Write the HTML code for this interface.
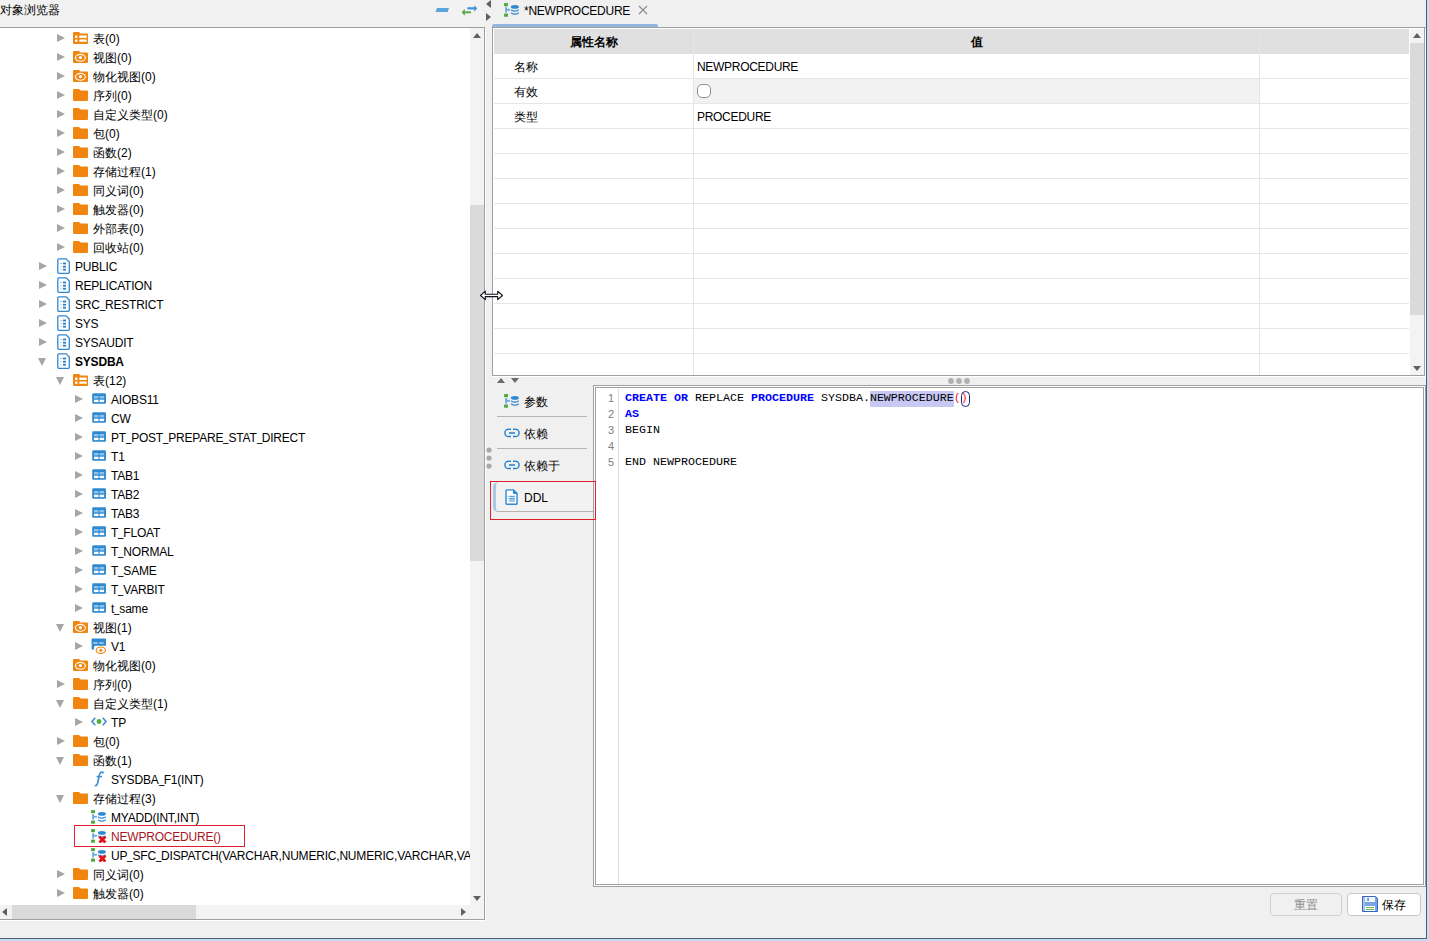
<!DOCTYPE html>
<html><head><meta charset="utf-8"><title>DM</title><style>
*{margin:0;padding:0;box-sizing:border-box}
html,body{width:1429px;height:941px;overflow:hidden;background:#f0f0f0;font-family:"Liberation Sans",sans-serif;font-size:12px;color:#000}
.a{position:absolute}
.t{position:absolute;white-space:nowrap;line-height:19px;height:19px}
.tri{position:absolute;width:0;height:0}
.r{border-left:8px solid #a6a6a6;border-top:4.5px solid transparent;border-bottom:4.5px solid transparent}
.d{border-top:8px solid #a6a6a6;border-left:4.5px solid transparent;border-right:4.5px solid transparent}
svg{position:absolute;overflow:visible}
.mono{font-family:"Liberation Mono",monospace}
</style></head>
<body>

<svg width="0" height="0" style="position:absolute">
<defs>
 <symbol id="fold" viewBox="0 0 15 12"><path d="M1 0H6L7.6 1.6H14A1 1 0 0 1 15 2.6V11A1 1 0 0 1 14 12H1A1 1 0 0 1 0 11V1A1 1 0 0 1 1 0Z" fill="#f0860f"/></symbol>
 <symbol id="foldtab" viewBox="0 0 15 12"><path d="M1 0H6L7.6 1.6H14A1 1 0 0 1 15 2.6V11A1 1 0 0 1 14 12H1A1 1 0 0 1 0 11V1A1 1 0 0 1 1 0Z" fill="#f0860f"/><rect x="2" y="3.6" width="2.5" height="2.3" rx="0.4" fill="#fff"/><rect x="6.3" y="3.6" width="7.5" height="2.3" rx="0.4" fill="#fff"/><rect x="2" y="7.5" width="2.5" height="2.3" rx="0.4" fill="#fff"/><rect x="6.3" y="7.5" width="7.5" height="2.3" rx="0.4" fill="#fff"/></symbol>
 <symbol id="foldeye" viewBox="0 0 15 12"><path d="M1 0H6L7.6 1.6H14A1 1 0 0 1 15 2.6V11A1 1 0 0 1 14 12H1A1 1 0 0 1 0 11V1A1 1 0 0 1 1 0Z" fill="#f0860f"/><ellipse cx="7.4" cy="6.8" rx="5" ry="3.4" fill="none" stroke="#fff" stroke-width="1.1"/><circle cx="7.4" cy="6.6" r="1.6" fill="#fff"/></symbol>
 <symbol id="schema" viewBox="0 0 13 16"><path d="M1.8 0.9H9.2L12.3 4V14.4A0.9 0.9 0 0 1 11.4 15.3H1.7A0.9 0.9 0 0 1 0.8 14.4V1.8A0.9 0.9 0 0 1 1.8 0.9Z" fill="#fff" stroke="#2f88cf" stroke-width="1.3"/><rect x="3.2" y="5" width="2" height="1" fill="#8cbfe6"/><rect x="6" y="4.6" width="3" height="1.8" fill="#2a7fc8"/><rect x="3.2" y="8.2" width="2" height="1" fill="#b5d5ee"/><rect x="6" y="7.8" width="3" height="1.8" fill="#2a7fc8"/><rect x="3.2" y="11.2" width="2" height="1" fill="#b5d5ee"/><rect x="6" y="10.8" width="3" height="1.8" fill="#2a7fc8"/></symbol>
 <symbol id="tbl" viewBox="0 0 14 11"><rect x="0.2" y="0.3" width="13.8" height="10.4" rx="1.3" fill="#3189d0"/><rect x="2" y="3" width="4.5" height="2.4" fill="#8cc3ea"/><rect x="7.6" y="3" width="4.5" height="2.4" fill="#8cc3ea"/><rect x="2" y="6.7" width="4.5" height="2.4" fill="#fff"/><rect x="7.6" y="6.7" width="4.5" height="2.4" fill="#fff"/></symbol>
 <symbol id="proc" viewBox="0 0 16 14"><rect x="0.1" y="0.1" width="3.8" height="3.1" fill="#45a838"/><rect x="0.1" y="10.6" width="3.8" height="3.1" fill="#45a838"/><path d="M1.3 4.2H2.9L2.7 9.8H1.5Z" fill="#3f93d6"/><rect x="2.7" y="5.8" width="3.2" height="1.9" fill="#6aaade"/><ellipse cx="10.9" cy="3.9" rx="4" ry="1.8" fill="#2f88cf"/><path d="M6.9 6.2Q10.9 8.6 14.9 6.2V7.4Q10.9 10 6.9 7.4Z" fill="#2f88cf"/><path d="M6.9 9.2Q10.9 11.6 14.9 9.2V10.4Q10.9 13 6.9 10.4Z" fill="#2f88cf"/></symbol>
 <symbol id="procx" viewBox="0 0 16 14"><rect x="0.1" y="0.1" width="3.8" height="3.1" fill="#45a838"/><rect x="0.1" y="10.6" width="3.8" height="3.1" fill="#45a838"/><path d="M1.3 4.2H2.9L2.7 9.8H1.5Z" fill="#3f93d6"/><rect x="2.7" y="5.8" width="3.2" height="1.9" fill="#6aaade"/><ellipse cx="10.9" cy="3.9" rx="4" ry="1.8" fill="#2f88cf"/><path d="M6.9 6.2Q10.9 8.6 14.9 6.2V7.4Q10.9 10 6.9 7.4Z" fill="#2f88cf"/><path d="M8.4 7.8L14.4 13.6M14.4 7.8L8.4 13.6" stroke="#e8101a" stroke-width="2.8"/></symbol>
 <symbol id="link" viewBox="0 0 16 12"><path d="M7 2.3H4.5A3.6 3.6 0 0 0 4.5 9.5H7M9 2.3H11.5A3.6 3.6 0 0 1 11.5 9.5H9" fill="none" stroke="#2f88cf" stroke-width="1.5"/><rect x="5" y="5.1" width="6" height="1.8" fill="#3f93d6"/></symbol>
 <symbol id="doc" viewBox="0 0 13 16"><path d="M1.8 0.9H8.6L12 4.3V14.4A0.9 0.9 0 0 1 11.1 15.3H1.9A0.9 0.9 0 0 1 1 14.4V1.7A0.8 0.8 0 0 1 1.8 0.9Z" fill="#fff" stroke="#2f88cf" stroke-width="1.4"/><path d="M8.4 1V4.5H12" fill="#2f88cf" stroke="#2f88cf" stroke-width="1"/><rect x="2.6" y="6.9" width="1" height="1" fill="#6aaade"/><rect x="4.3" y="6.8" width="5.6" height="1.1" fill="#4196d8"/><rect x="2.6" y="8.9" width="1" height="1" fill="#6aaade"/><rect x="4.3" y="8.8" width="5.6" height="1.1" fill="#4196d8"/><rect x="4.3" y="10.2" width="5.6" height="2.6" fill="#8cc0e8"/><rect x="2.6" y="11" width="1" height="1" fill="#9cc8ec"/></symbol>
</defs></svg>

<!-- left panel title bar -->
<div class="a" style="left:0;top:0;width:484px;height:27px;background:#f2f2f2"></div>
<div class="t" style="left:0;top:1px">对象浏览器</div>
<svg style="left:435px;top:7px" width="16" height="6"><path d="M2 1H14L12.6 5H0.5Z" fill="#5aa5dc"/></svg>
<svg style="left:461px;top:4px" width="18" height="13"><path d="M6.4 4.3H13.6" stroke="#3a92d6" stroke-width="2.1"/><path d="M13.2 1.2L16.2 4.3L13.2 7.7Z" fill="#3a92d6"/><path d="M3.4 8.3H10" stroke="#52a843" stroke-width="1.9"/><path d="M3.8 4.9L0.7 8.3L3.8 11.7Z" fill="#52a843"/></svg>
<!-- tree panel -->
<div class="a" style="left:0;top:27px;width:485px;height:893px;border-top:1px solid #a0a0a0;border-right:1px solid #a0a0a0;border-bottom:1px solid #a0a0a0;background:#fff"></div>
<div class="a" style="left:0;top:28px;width:484px;height:877px;overflow:hidden">
<div class="a" style="left:0;top:-28px;width:484px;height:941px">
<div class="tri r" style="left:57px;top:34px"></div>
<svg style="left:73px;top:32px" width="15" height="12"><use href="#foldtab"/></svg>
<div class="t" style="left:93px;top:30px;">表(0)</div>
<div class="tri r" style="left:57px;top:53px"></div>
<svg style="left:73px;top:51px" width="15" height="12"><use href="#foldeye"/></svg>
<div class="t" style="left:93px;top:49px;">视图(0)</div>
<div class="tri r" style="left:57px;top:72px"></div>
<svg style="left:73px;top:70px" width="15" height="12"><use href="#foldeye"/></svg>
<div class="t" style="left:93px;top:68px;">物化视图(0)</div>
<div class="tri r" style="left:57px;top:91px"></div>
<svg style="left:73px;top:89px" width="15" height="12"><use href="#fold"/></svg>
<div class="t" style="left:93px;top:87px;">序列(0)</div>
<div class="tri r" style="left:57px;top:110px"></div>
<svg style="left:73px;top:108px" width="15" height="12"><use href="#fold"/></svg>
<div class="t" style="left:93px;top:106px;">自定义类型(0)</div>
<div class="tri r" style="left:57px;top:129px"></div>
<svg style="left:73px;top:127px" width="15" height="12"><use href="#fold"/></svg>
<div class="t" style="left:93px;top:125px;">包(0)</div>
<div class="tri r" style="left:57px;top:148px"></div>
<svg style="left:73px;top:146px" width="15" height="12"><use href="#fold"/></svg>
<div class="t" style="left:93px;top:144px;">函数(2)</div>
<div class="tri r" style="left:57px;top:167px"></div>
<svg style="left:73px;top:165px" width="15" height="12"><use href="#fold"/></svg>
<div class="t" style="left:93px;top:163px;">存储过程(1)</div>
<div class="tri r" style="left:57px;top:186px"></div>
<svg style="left:73px;top:184px" width="15" height="12"><use href="#fold"/></svg>
<div class="t" style="left:93px;top:182px;">同义词(0)</div>
<div class="tri r" style="left:57px;top:205px"></div>
<svg style="left:73px;top:203px" width="15" height="12"><use href="#fold"/></svg>
<div class="t" style="left:93px;top:201px;">触发器(0)</div>
<div class="tri r" style="left:57px;top:224px"></div>
<svg style="left:73px;top:222px" width="15" height="12"><use href="#fold"/></svg>
<div class="t" style="left:93px;top:220px;">外部表(0)</div>
<div class="tri r" style="left:57px;top:243px"></div>
<svg style="left:73px;top:241px" width="15" height="12"><use href="#fold"/></svg>
<div class="t" style="left:93px;top:239px;">回收站(0)</div>
<div class="tri r" style="left:39px;top:262px"></div>
<svg style="left:57px;top:258px" width="13" height="16"><use href="#schema"/></svg>
<div class="t" style="left:75px;top:258px;letter-spacing:-0.2px;">PUBLIC</div>
<div class="tri r" style="left:39px;top:281px"></div>
<svg style="left:57px;top:277px" width="13" height="16"><use href="#schema"/></svg>
<div class="t" style="left:75px;top:277px;letter-spacing:-0.2px;">REPLICATION</div>
<div class="tri r" style="left:39px;top:300px"></div>
<svg style="left:57px;top:296px" width="13" height="16"><use href="#schema"/></svg>
<div class="t" style="left:75px;top:296px;letter-spacing:-0.2px;">SRC<span style="display:inline-block;width:5.2px;transform:scaleX(0.8);transform-origin:0 0;position:relative;top:-1px">_</span>RESTRICT</div>
<div class="tri r" style="left:39px;top:319px"></div>
<svg style="left:57px;top:315px" width="13" height="16"><use href="#schema"/></svg>
<div class="t" style="left:75px;top:315px;letter-spacing:-0.2px;">SYS</div>
<div class="tri r" style="left:39px;top:338px"></div>
<svg style="left:57px;top:334px" width="13" height="16"><use href="#schema"/></svg>
<div class="t" style="left:75px;top:334px;letter-spacing:-0.2px;">SYSAUDIT</div>
<div class="tri d" style="left:38px;top:358px"></div>
<svg style="left:57px;top:353px" width="13" height="16"><use href="#schema"/></svg>
<div class="t" style="left:75px;top:353px;letter-spacing:-0.2px;font-weight:bold;">SYSDBA</div>
<div class="tri d" style="left:56px;top:377px"></div>
<svg style="left:73px;top:374px" width="15" height="12"><use href="#foldtab"/></svg>
<div class="t" style="left:93px;top:372px;">表(12)</div>
<div class="tri r" style="left:75px;top:395px"></div>
<svg style="left:92px;top:393px" width="14" height="11"><use href="#tbl"/></svg>
<div class="t" style="left:111px;top:391px;letter-spacing:-0.2px;">AIOBS11</div>
<div class="tri r" style="left:75px;top:414px"></div>
<svg style="left:92px;top:412px" width="14" height="11"><use href="#tbl"/></svg>
<div class="t" style="left:111px;top:410px;letter-spacing:-0.2px;">CW</div>
<div class="tri r" style="left:75px;top:433px"></div>
<svg style="left:92px;top:431px" width="14" height="11"><use href="#tbl"/></svg>
<div class="t" style="left:111px;top:429px;letter-spacing:-0.2px;">PT<span style="display:inline-block;width:5.2px;transform:scaleX(0.8);transform-origin:0 0;position:relative;top:-1px">_</span>POST<span style="display:inline-block;width:5.2px;transform:scaleX(0.8);transform-origin:0 0;position:relative;top:-1px">_</span>PREPARE<span style="display:inline-block;width:5.2px;transform:scaleX(0.8);transform-origin:0 0;position:relative;top:-1px">_</span>STAT<span style="display:inline-block;width:5.2px;transform:scaleX(0.8);transform-origin:0 0;position:relative;top:-1px">_</span>DIRECT</div>
<div class="tri r" style="left:75px;top:452px"></div>
<svg style="left:92px;top:450px" width="14" height="11"><use href="#tbl"/></svg>
<div class="t" style="left:111px;top:448px;letter-spacing:-0.2px;">T1</div>
<div class="tri r" style="left:75px;top:471px"></div>
<svg style="left:92px;top:469px" width="14" height="11"><use href="#tbl"/></svg>
<div class="t" style="left:111px;top:467px;letter-spacing:-0.2px;">TAB1</div>
<div class="tri r" style="left:75px;top:490px"></div>
<svg style="left:92px;top:488px" width="14" height="11"><use href="#tbl"/></svg>
<div class="t" style="left:111px;top:486px;letter-spacing:-0.2px;">TAB2</div>
<div class="tri r" style="left:75px;top:509px"></div>
<svg style="left:92px;top:507px" width="14" height="11"><use href="#tbl"/></svg>
<div class="t" style="left:111px;top:505px;letter-spacing:-0.2px;">TAB3</div>
<div class="tri r" style="left:75px;top:528px"></div>
<svg style="left:92px;top:526px" width="14" height="11"><use href="#tbl"/></svg>
<div class="t" style="left:111px;top:524px;letter-spacing:-0.2px;">T<span style="display:inline-block;width:5.2px;transform:scaleX(0.8);transform-origin:0 0;position:relative;top:-1px">_</span>FLOAT</div>
<div class="tri r" style="left:75px;top:547px"></div>
<svg style="left:92px;top:545px" width="14" height="11"><use href="#tbl"/></svg>
<div class="t" style="left:111px;top:543px;letter-spacing:-0.2px;">T<span style="display:inline-block;width:5.2px;transform:scaleX(0.8);transform-origin:0 0;position:relative;top:-1px">_</span>NORMAL</div>
<div class="tri r" style="left:75px;top:566px"></div>
<svg style="left:92px;top:564px" width="14" height="11"><use href="#tbl"/></svg>
<div class="t" style="left:111px;top:562px;letter-spacing:-0.2px;">T<span style="display:inline-block;width:5.2px;transform:scaleX(0.8);transform-origin:0 0;position:relative;top:-1px">_</span>SAME</div>
<div class="tri r" style="left:75px;top:585px"></div>
<svg style="left:92px;top:583px" width="14" height="11"><use href="#tbl"/></svg>
<div class="t" style="left:111px;top:581px;letter-spacing:-0.2px;">T<span style="display:inline-block;width:5.2px;transform:scaleX(0.8);transform-origin:0 0;position:relative;top:-1px">_</span>VARBIT</div>
<div class="tri r" style="left:75px;top:604px"></div>
<svg style="left:92px;top:602px" width="14" height="11"><use href="#tbl"/></svg>
<div class="t" style="left:111px;top:600px;letter-spacing:-0.2px;">t<span style="display:inline-block;width:5.2px;transform:scaleX(0.8);transform-origin:0 0;position:relative;top:-1px">_</span>same</div>
<div class="tri d" style="left:56px;top:624px"></div>
<svg style="left:73px;top:621px" width="15" height="12"><use href="#foldeye"/></svg>
<div class="t" style="left:93px;top:619px;">视图(1)</div>
<div class="tri r" style="left:75px;top:642px"></div>
<svg style="left:91px;top:638px" width="16" height="17"><path d="M1.4 0.5H14.2A0.8 0.8 0 0 1 15 1.3V7.8H4.2Q2.9 8.2 3 9.6V10.6Q3 11.8 1.8 11.8A1.2 1.2 0 0 1 0.6 10.6V1.3A0.8 0.8 0 0 1 1.4 0.5Z" fill="#3189d0"/><rect x="2.2" y="4" width="4.4" height="2" fill="#8cc3ea"/><rect x="8.2" y="4" width="4.4" height="2" fill="#8cc3ea"/><ellipse cx="9.8" cy="12.2" rx="5.6" ry="4" fill="#fff"/><ellipse cx="9.8" cy="12.2" rx="4.6" ry="3.2" fill="#fff" stroke="#f0860f" stroke-width="1.2"/><circle cx="9.8" cy="12.2" r="1.5" fill="#f0860f"/></svg>
<div class="t" style="left:111px;top:638px;letter-spacing:-0.2px;">V1</div>
<svg style="left:73px;top:659px" width="15" height="12"><use href="#foldeye"/></svg>
<div class="t" style="left:93px;top:657px;">物化视图(0)</div>
<div class="tri r" style="left:57px;top:680px"></div>
<svg style="left:73px;top:678px" width="15" height="12"><use href="#fold"/></svg>
<div class="t" style="left:93px;top:676px;">序列(0)</div>
<div class="tri d" style="left:56px;top:700px"></div>
<svg style="left:73px;top:697px" width="15" height="12"><use href="#fold"/></svg>
<div class="t" style="left:93px;top:695px;">自定义类型(1)</div>
<div class="tri r" style="left:75px;top:718px"></div>
<svg style="left:91px;top:717px" width="16" height="10"><path d="M4.2 0.8L1 4.5L4.2 8.2M11.8 0.8L15 4.5L11.8 8.2" fill="none" stroke="#3b8fd0" stroke-width="1.6"/><circle cx="8" cy="4.5" r="2.4" fill="#4caf3c"/></svg>
<div class="t" style="left:111px;top:714px;letter-spacing:-0.2px;">TP</div>
<div class="tri r" style="left:57px;top:737px"></div>
<svg style="left:73px;top:735px" width="15" height="12"><use href="#fold"/></svg>
<div class="t" style="left:93px;top:733px;">包(0)</div>
<div class="tri d" style="left:56px;top:757px"></div>
<svg style="left:73px;top:754px" width="15" height="12"><use href="#fold"/></svg>
<div class="t" style="left:93px;top:752px;">函数(1)</div>
<svg style="left:92px;top:771px" width="14" height="16"><path d="M11.5 2.2Q10.5 0.8 9 1.3Q7.6 1.9 7.1 4.8L5.5 12.6Q5 15 2.8 14.6" fill="none" stroke="#3b8fd0" stroke-width="1.7"/><path d="M4.6 5.6H10" stroke="#3b8fd0" stroke-width="1.5"/></svg>
<div class="t" style="left:111px;top:771px;letter-spacing:-0.2px;">SYSDBA<span style="display:inline-block;width:5.2px;transform:scaleX(0.8);transform-origin:0 0;position:relative;top:-1px">_</span>F1(INT)</div>
<div class="tri d" style="left:56px;top:795px"></div>
<svg style="left:73px;top:792px" width="15" height="12"><use href="#fold"/></svg>
<div class="t" style="left:93px;top:790px;">存储过程(3)</div>
<svg style="left:91px;top:810px" width="16" height="14"><use href="#proc"/></svg>
<div class="t" style="left:111px;top:809px;letter-spacing:-0.2px;">MYADD(INT,INT)</div>
<svg style="left:91px;top:829px" width="16" height="14"><use href="#procx"/></svg>
<div class="t" style="left:111px;top:828px;letter-spacing:-0.2px;color:#a8141c;">NEWPROCEDURE()</div>
<svg style="left:91px;top:848px" width="16" height="14"><use href="#procx"/></svg>
<div class="t" style="left:111px;top:847px;letter-spacing:-0.2px;">UP<span style="display:inline-block;width:5.2px;transform:scaleX(0.8);transform-origin:0 0;position:relative;top:-1px">_</span>SFC<span style="display:inline-block;width:5.2px;transform:scaleX(0.8);transform-origin:0 0;position:relative;top:-1px">_</span>DISPATCH(VARCHAR,NUMERIC,NUMERIC,VARCHAR,VARCHAR)</div>
<div class="tri r" style="left:57px;top:870px"></div>
<svg style="left:73px;top:868px" width="15" height="12"><use href="#fold"/></svg>
<div class="t" style="left:93px;top:866px;">同义词(0)</div>
<div class="tri r" style="left:57px;top:889px"></div>
<svg style="left:73px;top:887px" width="15" height="12"><use href="#fold"/></svg>
<div class="t" style="left:93px;top:885px;">触发器(0)</div>
<div class="a" style="left:74px;top:825px;width:171px;height:22px;border:1px solid #e0202a"></div>
</div></div>
<div class="a" style="left:485px;top:28px;width:1px;height:893px;background:#fff"></div>
<div class="a" style="left:0;top:920px;width:486px;height:1px;background:#fff"></div>
<!-- vertical scrollbar -->
<div class="a" style="left:470px;top:28px;width:14px;height:877px;background:#f3f3f3"></div>
<div class="a" style="left:470px;top:205px;width:14px;height:356px;background:#dadada"></div>
<div class="tri" style="left:472.5px;top:33px;border-bottom:5px solid #606060;border-left:4.5px solid transparent;border-right:4.5px solid transparent"></div>
<div class="tri" style="left:472.5px;top:896px;border-top:5px solid #606060;border-left:4.5px solid transparent;border-right:4.5px solid transparent"></div>
<!-- horizontal scrollbar -->
<div class="a" style="left:0;top:905px;width:484px;height:14px;background:#f3f3f3"></div>
<div class="a" style="left:12px;top:905px;width:184px;height:14px;background:#dadada"></div>
<div class="tri" style="left:2px;top:908px;border-right:5px solid #606060;border-top:4.5px solid transparent;border-bottom:4.5px solid transparent"></div>
<div class="tri" style="left:461px;top:908px;border-left:5px solid #606060;border-top:4.5px solid transparent;border-bottom:4.5px solid transparent"></div>

<!-- splitter arrows -->
<div class="tri" style="left:486px;top:0px;border-right:5px solid #606060;border-top:4px solid transparent;border-bottom:4px solid transparent"></div>
<div class="tri" style="left:486px;top:13px;border-left:5px solid #606060;border-top:4.5px solid transparent;border-bottom:4.5px solid transparent"></div>

<!-- editor tab -->
<svg style="left:504px;top:3px" width="16" height="14"><use href="#proc"/></svg>
<div class="t" style="left:524px;top:2px;letter-spacing:-0.25px">*NEWPROCEDURE</div>
<svg style="left:638px;top:5px" width="10" height="10"><path d="M1 1L9 9M9 1L1 9" stroke="#8a8a8a" stroke-width="1.1"/></svg>
<div class="a" style="left:492px;top:24px;width:166px;height:3px;background:#92b6dd;border-radius:2px 2px 0 0"></div>
<div class="a" style="left:492px;top:27px;width:934px;height:1px;background:#a0a0a0"></div>

<!-- properties table -->
<div class="a" style="left:492px;top:28px;width:933px;height:348px;border-left:1px solid #a0a0a0;border-right:1px solid #a0a0a0;border-bottom:1px solid #a0a0a0;background:#fff"></div>
<div class="a" style="left:1425px;top:28px;width:1px;height:349px;background:#fff"></div>
<div class="a" style="left:494px;top:29px;width:915px;height:25px;background:#e0e0e0"></div>
<div class="a" style="left:693px;top:29px;width:1px;height:346px;background:#e6e6e6"></div>
<div class="a" style="left:1259px;top:29px;width:1px;height:346px;background:#e6e6e6"></div>
<div class="a" style="left:694px;top:79px;width:565px;height:24px;background:#f2f2f2"></div>
<div class="a" style="left:494px;top:78px;width:915px;height:1px;background:#e6e6e6"></div>
<div class="a" style="left:494px;top:103px;width:915px;height:1px;background:#e6e6e6"></div>
<div class="a" style="left:494px;top:128px;width:915px;height:1px;background:#e6e6e6"></div>
<div class="a" style="left:494px;top:153px;width:915px;height:1px;background:#e6e6e6"></div>
<div class="a" style="left:494px;top:178px;width:915px;height:1px;background:#e6e6e6"></div>
<div class="a" style="left:494px;top:203px;width:915px;height:1px;background:#e6e6e6"></div>
<div class="a" style="left:494px;top:228px;width:915px;height:1px;background:#e6e6e6"></div>
<div class="a" style="left:494px;top:253px;width:915px;height:1px;background:#e6e6e6"></div>
<div class="a" style="left:494px;top:278px;width:915px;height:1px;background:#e6e6e6"></div>
<div class="a" style="left:494px;top:303px;width:915px;height:1px;background:#e6e6e6"></div>
<div class="a" style="left:494px;top:328px;width:915px;height:1px;background:#e6e6e6"></div>
<div class="a" style="left:494px;top:353px;width:915px;height:1px;background:#e6e6e6"></div>
<div class="t" style="left:494px;top:33px;width:199px;text-align:center;font-weight:bold">属性名称</div>
<div class="t" style="left:694px;top:33px;width:565px;text-align:center;font-weight:bold">值</div>
<div class="t" style="left:514px;top:58px">名称</div>
<div class="t" style="left:697px;top:58px;letter-spacing:-0.3px">NEWPROCEDURE</div>
<div class="t" style="left:514px;top:83px">有效</div>
<div class="a" style="left:697px;top:84px;width:14px;height:14px;border:1px solid #8c8c8c;border-radius:5px;background:#fff"></div>
<div class="t" style="left:514px;top:108px">类型</div>
<div class="t" style="left:697px;top:108px;letter-spacing:-0.3px">PROCEDURE</div>

<!-- table scrollbar -->
<div class="a" style="left:1410px;top:29px;width:14px;height:346px;background:#f3f3f3"></div>
<div class="a" style="left:1410px;top:43px;width:14px;height:272px;background:#dadada"></div>
<div class="tri" style="left:1413px;top:33px;border-bottom:5px solid #606060;border-left:4px solid transparent;border-right:4px solid transparent"></div>
<div class="tri" style="left:1413px;top:366px;border-top:5px solid #606060;border-left:4px solid transparent;border-right:4px solid transparent"></div>

<!-- below table -->
<div class="tri" style="left:497px;top:378px;border-bottom:5px solid #6a6a6a;border-left:4.5px solid transparent;border-right:4.5px solid transparent"></div>
<div class="tri" style="left:511px;top:378px;border-top:5px solid #6a6a6a;border-left:4.5px solid transparent;border-right:4.5px solid transparent"></div>
<div class="a" style="left:492px;top:376px;width:934px;height:1px;background:#fff"></div>
<svg style="left:947px;top:377px" width="26" height="8"><circle cx="4" cy="4" r="2.9" fill="#b0b0b0"/><circle cx="12" cy="4" r="2.9" fill="#b0b0b0"/><circle cx="20" cy="4" r="2.9" fill="#b0b0b0"/></svg>
<svg style="left:485px;top:446px" width="8" height="24"><circle cx="4" cy="4" r="2.6" fill="#a8a8a8"/><circle cx="4" cy="12" r="2.6" fill="#a8a8a8"/><circle cx="4" cy="20" r="2.6" fill="#a8a8a8"/></svg>

<!-- side tabs -->
<svg style="left:504px;top:394px" width="16" height="14"><use href="#proc"/></svg>
<div class="t" style="left:524px;top:393px">参数</div>
<div class="a" style="left:497px;top:416px;width:90px;height:1px;background:#b4b4b4"></div>
<svg style="left:504px;top:427px" width="16" height="12"><use href="#link"/></svg>
<div class="t" style="left:524px;top:425px">依赖</div>
<div class="a" style="left:497px;top:448px;width:90px;height:1px;background:#b4b4b4"></div>
<svg style="left:504px;top:459px" width="16" height="12"><use href="#link"/></svg>
<div class="t" style="left:524px;top:457px">依赖于</div>
<div class="a" style="left:493px;top:482px;width:101px;height:30px;border-left:3px solid #a8c8e6;border-bottom:1px solid #b4b4b4;border-radius:5px 0 0 5px;background:#f2f2f2"></div>
<svg style="left:505px;top:489px" width="13" height="16"><use href="#doc"/></svg>
<div class="t" style="left:524px;top:489px">DDL</div>

<!-- editor -->
<div class="a" style="left:593px;top:385px;width:833px;height:502px;border:1px solid #a0a0a0;background:#fff"></div>
<div class="a" style="left:595px;top:387px;width:829px;height:498px;border:1px solid #a0a0a0;background:#fff"></div>
<div class="a" style="left:618px;top:389px;width:1px;height:495px;background:#dcdcdc"></div>
<div class="a" style="left:870px;top:391px;width:84px;height:16px;background:#c8c8f4"></div>
<div class="a" style="left:596px;top:390px;width:18px;height:16px;line-height:16px;text-align:right;color:#808080;font-size:11px">1</div>
<div class="a mono" style="left:625px;top:390px;height:16px;line-height:16px;font-size:11.67px;white-space:pre"><span style="color:#0000ff;font-weight:bold">CREATE</span> <span style="color:#0000ff;font-weight:bold">OR</span> REPLACE <span style="color:#0000ff;font-weight:bold">PROCEDURE</span> SYSDBA.NEWPROCEDURE<span style="color:#f02030">(</span><span style="color:#f02030">)</span></div>
<div class="a" style="left:596px;top:406px;width:18px;height:16px;line-height:16px;text-align:right;color:#808080;font-size:11px">2</div>
<div class="a mono" style="left:625px;top:406px;height:16px;line-height:16px;font-size:11.67px;white-space:pre"><span style="color:#0000ff;font-weight:bold">AS</span></div>
<div class="a" style="left:596px;top:422px;width:18px;height:16px;line-height:16px;text-align:right;color:#808080;font-size:11px">3</div>
<div class="a mono" style="left:625px;top:422px;height:16px;line-height:16px;font-size:11.67px;white-space:pre">BEGIN</div>
<div class="a" style="left:596px;top:438px;width:18px;height:16px;line-height:16px;text-align:right;color:#808080;font-size:11px">4</div>
<div class="a mono" style="left:625px;top:438px;height:16px;line-height:16px;font-size:11.67px;white-space:pre"></div>
<div class="a" style="left:596px;top:454px;width:18px;height:16px;line-height:16px;text-align:right;color:#808080;font-size:11px">5</div>
<div class="a mono" style="left:625px;top:454px;height:16px;line-height:16px;font-size:11.67px;white-space:pre">END NEWPROCEDURE</div>
<div class="a" style="left:961px;top:391px;width:9px;height:16px;border:1.4px solid #202088;border-radius:4.5px"></div>
<div class="a" style="left:490px;top:481px;width:106px;height:39px;border:1px solid #e0202a"></div>

<!-- buttons -->
<div class="a" style="left:1270px;top:893px;width:72px;height:23px;border:1px solid #d0d0d0;border-radius:4px;background:#f0f0f0"></div>
<div class="t" style="left:1294px;top:896px;color:#8c8c8c">重置</div>
<div class="a" style="left:1347px;top:893px;width:74px;height:23px;border:1px solid #c8c8c8;border-radius:4px;background:#fff"></div>
<svg style="left:1362px;top:896px" width="16" height="16"><path d="M0.5 0.5H13.6L15.5 2.4V15.5H0.5Z" fill="#7aa4e2" stroke="#3467bd" stroke-width="1"/><rect x="1.2" y="1.2" width="1.3" height="13.6" fill="#b9d0f2"/><rect x="3" y="1" width="10" height="5" fill="#f2f6fc"/><rect x="5.4" y="1.8" width="1.3" height="3.2" fill="#3a6cc0"/><rect x="3" y="10" width="10" height="5" fill="#fff"/><rect x="4" y="11" width="8" height="1.1" fill="#74b85a"/><rect x="4" y="13" width="8" height="1.1" fill="#74b85a"/></svg>
<div class="t" style="left:1382px;top:896px">保存</div>

<!-- window frame -->
<div class="a" style="left:1426px;top:0;width:1px;height:939px;background:#4f5f70"></div>
<div class="a" style="left:1427px;top:0;width:2px;height:941px;background:#c4dcf4"></div>
<div class="a" style="left:0;top:938px;width:1427px;height:1px;background:#4f5f70"></div>
<div class="a" style="left:0;top:939px;width:1429px;height:2px;background:#c4dcf4"></div>

<!-- cursor -->
<svg style="left:474px;top:284px" width="36" height="22"><path d="M6.5 11.5L11.3 7.2V10.2H23.7V7.2L28.5 11.5L23.7 15.7V12.6H11.3V15.7Z" fill="#fff" stroke="#12121e" stroke-width="1.1" stroke-linejoin="round"/></svg>
</body></html>
